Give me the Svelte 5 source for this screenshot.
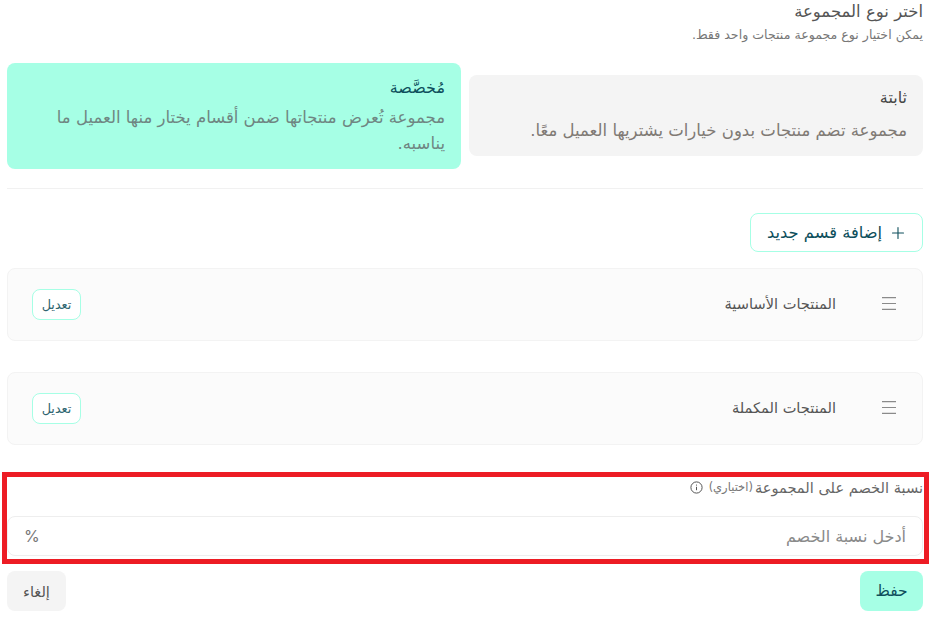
<script>
  const sections = ['المنتجات الأساسية', 'المنتجات المكملة'];
</script>

<div class="page" dir="rtl">
  <header class="head">
    <h1>اختر نوع المجموعة</h1>
    <p>يمكن اختيار نوع مجموعة منتجات واحد فقط.</p>
  </header>

  <div class="types">
    <div class="type">
      <h2>ثابتة</h2>
      <p>مجموعة تضم منتجات بدون خيارات يشتريها العميل معًا.</p>
    </div>
    <div class="type active">
      <h2>مُخصَّصة</h2>
      <p>مجموعة تُعرض منتجاتها ضمن أقسام يختار منها العميل ما يناسبه.</p>
    </div>
  </div>

  <div class="divider"></div>

  <div class="add-row">
    <button class="add">
      <svg width="14" height="14" viewBox="0 0 14 14" fill="none" stroke="#0e4f5c" stroke-width="1.1" stroke-linecap="round"><path d="M7 1.5v11M1.5 7h11"/></svg>
      إضافة قسم جديد
    </button>
  </div>

  <div class="sections">
    {#each sections as s}
      <div class="section">
        <div class="section-title">
          <svg width="14" height="13" viewBox="0 0 14 13" fill="none" stroke="#8a8a8a" stroke-width="1.1"><path d="M0 .6h14M0 6.5h14M0 12.4h14"/></svg>
          <span>{s}</span>
        </div>
        <button class="edit">تعديل</button>
      </div>
    {/each}
  </div>

  <div class="discount">
    <div class="label">
      <span class="main">نسبة الخصم على المجموعة</span>
      <span class="opt">(اختياري)</span>
      <svg width="13" height="13" viewBox="0 0 13 13" fill="none" stroke="#555" stroke-width="1"><circle cx="6.5" cy="6.5" r="5.6"/><path d="M6.5 5.8v3.4M6.5 3.6v1"/></svg>
    </div>
    <div class="input">
      <span class="ph">أدخل نسبة الخصم</span>
      <span class="pct">%</span>
    </div>
  </div>

  <div class="actions">
    <button class="save">حفظ</button>
    <button class="cancel">إلغاء</button>
  </div>

  <div class="mark"></div>
</div>

<style>
  :global(body) {
    margin: 0;
    background: #fff;
  }
  .page {
    position: relative;
    width: 932px;
    height: 620px;
    overflow: hidden;
    box-sizing: border-box;
    padding: 0 9px 0 7px;
    font-family: "DejaVu Sans", "Noto Sans", sans-serif;
    color: #444;
  }
  h1, h2, p { margin: 0; font-weight: 400; }
  .head { height: 63px; padding-top: 1px; box-sizing: border-box; }
  .head h1 { font-size: 16.5px; line-height: 21px; color: #555; }
  .head p { font-size: 12.6px; line-height: 18px; margin-top: 4px; color: #777; }

  .types {
    display: flex;
    gap: 8px;
    align-items: flex-start;
    height: 106px;
  }
  .type {
    flex: 1 1 0;
    box-sizing: border-box;
    background: #f4f4f4;
    border-radius: 8px;
    padding: 12px 16px;
    margin-top: 12px;
    height: 81px;
  }
  .type.active {
    background: #a6ffe5;
    height: 106px;
    margin-top: 0;
    padding-top: 14px;
  }
  .type h2 { font-size: 16px; line-height: 22px; color: #444; }
  .type.active h2 { color: #0e4f5c; }
  .type p { font-size: 16.5px; line-height: 26px; color: #807a74; margin-top: 9px; }
  .type.active p { color: #6f8682; margin-top: 6px; }

  .divider { height: 1px; background: #f1f1f1; margin-top: 19px; }

  .add-row { display: flex; margin-top: 24px; }
  button { font-family: inherit; cursor: pointer; }
  .add {
    width: 173px;
    height: 39px;
    box-sizing: border-box;
    background: #fff;
    border: 1px solid #a6ffe5;
    border-radius: 8px;
    display: flex;
    align-items: center;
    gap: 9px;
    padding: 0 17px 0 16px;
    color: #0e4f5c;
    font-size: 16.3px;
    white-space: nowrap;
  }

  .sections { display: flex; flex-direction: column; gap: 31px; margin-top: 16px; }
  .section {
    height: 73px;
    box-sizing: border-box;
    background: #fbfbfb;
    border: 1px solid #f3f3f3;
    border-radius: 8px;
    display: flex;
    align-items: center;
    justify-content: space-between;
    padding: 0 26px 0 24px;
  }
  .section-title { display: flex; align-items: center; gap: 46px; font-size: 14.6px; color: #555; }
  .section-title span { padding-bottom: 2px; }
  .section-title svg { margin-bottom: 3px; }
  .edit {
    width: 49px;
    height: 31px;
    box-sizing: border-box;
    background: #fff;
    border: 1px solid #a6ffe5;
    border-radius: 8px;
    color: #2f6570;
    font-size: 12.8px;
    padding: 0;
  }

  .discount { margin-top: 30px; }
  .label { display: flex; align-items: center; gap: 2px; height: 24px; }
  .label .main { font-size: 14.6px; color: #666; }
  .label .opt { font-size: 11.5px; color: #777; }
  .label svg { margin-right: 4px; }
  .input {
    margin-top: 17px;
    height: 40px;
    box-sizing: border-box;
    border: 1px solid #eee;
    border-radius: 8px;
    display: flex;
    align-items: center;
    justify-content: space-between;
    padding: 0 16px;
  }
  .ph { font-size: 16px; color: #8a8a8a; }
  .pct { font-size: 16px; color: #777; font-family: "Inter", sans-serif; }

  .actions { display: flex; justify-content: space-between; margin-top: 15px; }
  .save, .cancel {
    height: 40px;
    border: 0;
    border-radius: 8px;
    font-size: 15.5px;
    padding: 0;
  }
  .save { width: 63px; background: #a6ffe5; color: #0e4f5c; }
  .cancel { width: 59px; background: #f4f4f4; color: #555; font-size: 14.6px; }

  .mark {
    position: absolute;
    left: 2px;
    top: 472px;
    width: 927px;
    height: 92px;
    box-sizing: border-box;
    border: 5px solid #ed1c24;
    pointer-events: none;
  }
</style>
